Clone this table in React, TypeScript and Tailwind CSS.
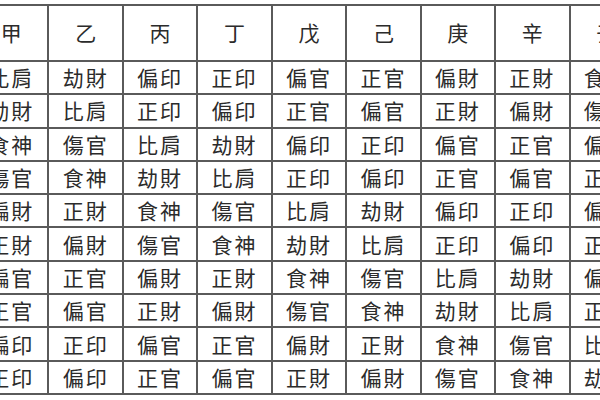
const stems = ["甲", "乙", "丙", "丁", "戊", "己", "庚", "辛", "壬"];

const rows = [
  ["比肩", "劫財", "偏印", "正印", "偏官", "正官", "偏財", "正財", "食神"],
  ["劫財", "比肩", "正印", "偏印", "正官", "偏官", "正財", "偏財", "傷官"],
  ["食神", "傷官", "比肩", "劫財", "偏印", "正印", "偏官", "正官", "偏財"],
  ["傷官", "食神", "劫財", "比肩", "正印", "偏印", "正官", "偏官", "正財"],
  ["偏財", "正財", "食神", "傷官", "比肩", "劫財", "偏印", "正印", "偏官"],
  ["正財", "偏財", "傷官", "食神", "劫財", "比肩", "正印", "偏印", "正官"],
  ["偏官", "正官", "偏財", "正財", "食神", "傷官", "比肩", "劫財", "偏印"],
  ["正官", "偏官", "正財", "偏財", "傷官", "食神", "劫財", "比肩", "正印"],
  ["偏印", "正印", "偏官", "正官", "偏財", "正財", "食神", "傷官", "比肩"],
  ["正印", "偏印", "正官", "偏官", "正財", "偏財", "傷官", "食神", "劫財"],
];

export default function App() {
  return (
    <div
      className="w-[600px] h-[400px] overflow-hidden bg-white text-[#2b2b2b]"
      style={{ fontFamily: '"Noto Sans CJK TC", "Noto Sans CJK SC", sans-serif' }}
    >
      <table className="mt-[4px] ml-[-27px] border-collapse table-fixed w-[672px]">
        <thead>
          <tr className="h-[56px]">
            {stems.map((s) => (
              <th key={s} className="border-2 border-[#5a5a5a] text-[21px] font-normal text-center">
                {s}
              </th>
            ))}
          </tr>
        </thead>
        <tbody>
          {rows.map((row, i) => (
            <tr key={i} className="h-[33.3px]">
              {row.map((cell, j) => (
                <td key={j} className="border-2 border-[#5a5a5a] text-[21px] leading-none text-center tracking-[2px]">
                  {cell}
                </td>
              ))}
            </tr>
          ))}
        </tbody>
      </table>
    </div>
  );
}
